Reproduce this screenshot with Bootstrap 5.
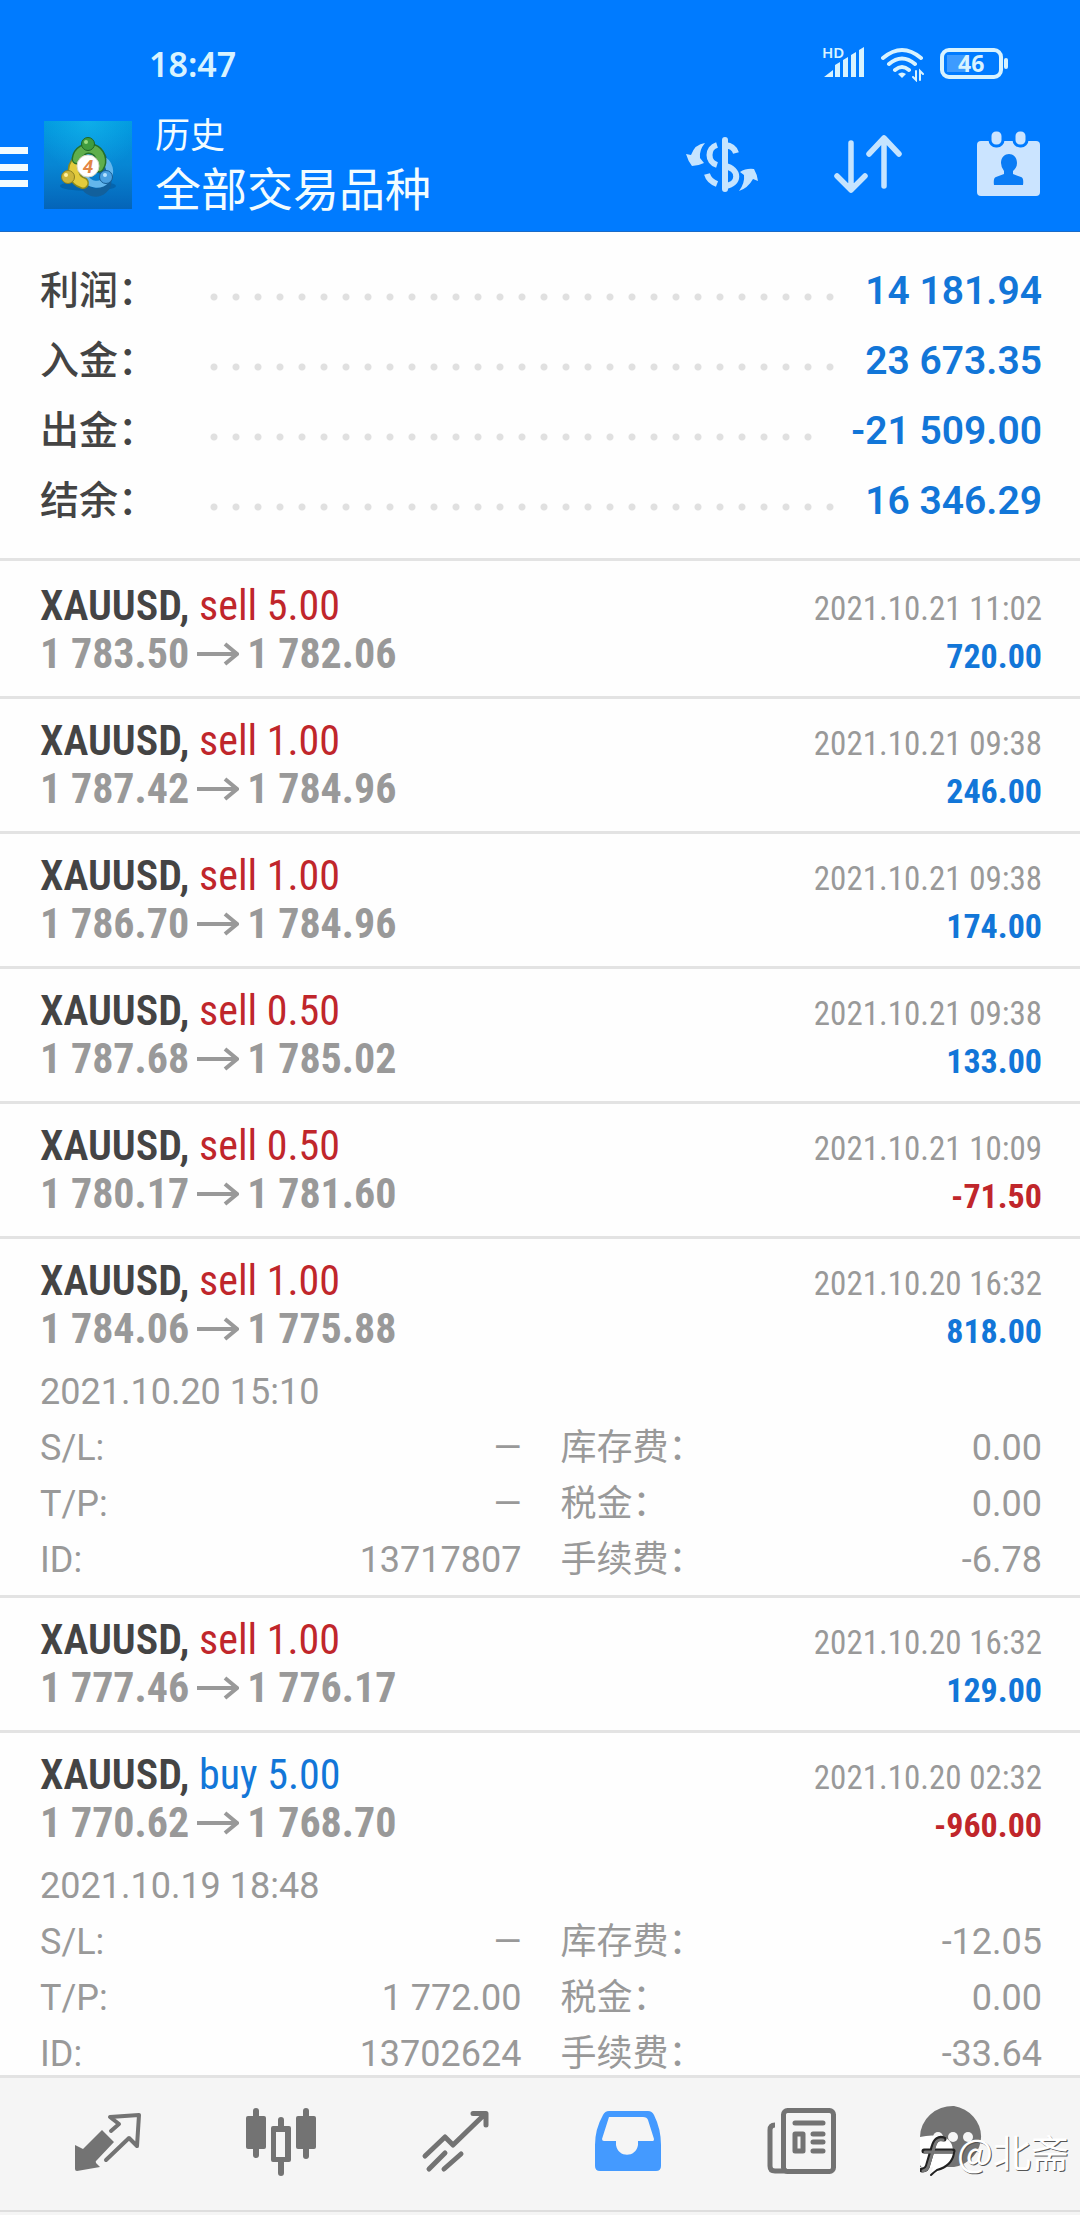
<!DOCTYPE html>
<html lang="zh-CN">
<head>
<meta charset="utf-8">
<meta name="viewport" content="width=device-width, initial-scale=1">
<title>历史 - 全部交易品种</title>
<link href="https://cdn.jsdelivr.net/npm/bootstrap@5.3.0/dist/css/bootstrap.min.css" rel="stylesheet">
<style>
:root{--ink:#444;--muted:#999;--up:#1276d8;--down:#c0262b;--line:#e3e3e3;--brand:#007bff;--glyph:#c5e4ff}
body{font-family:Roboto,"Noto Sans CJK SC",sans-serif;background:#fefefe;color:var(--ink)}
svg{display:block;flex:none}
.topbar{background:var(--brand);border-bottom:1px solid #1a6bc8;color:#f2fcff}
.status{height:90px;padding:36px 71px 0 149px;color:#d8f3ff}
.clock{font:600 34px/56px "Noto Sans",sans-serif}
.titlebar{height:141px;padding:21px 39px 0 0}
.plain{background:none;border:0;padding:0;color:inherit}
.menu{margin-top:36px}
.title-sm{font-size:35px;line-height:46px}
.title-lg{font-size:46px;line-height:60px;font-weight:400}
.titles{margin:-1px 0 0 22px;font-family:"Noto Sans CJK SC",sans-serif}
.tools{gap:75px;color:var(--glyph)}
.feed{overflow-y:auto;scrollbar-width:none}
.summary{padding:22px 38px 24px 40px;border-bottom:3px solid var(--line)}
.sum-line{height:70px}
.sum-line dt{width:170px;font:500 39px/66px "Noto Sans CJK SC",sans-serif}
.sum-line dd{font-size:39px;line-height:66px;font-weight:600;color:var(--up)}
.leader{height:8px;align-self:center;margin:16px 30px 0 0;background:radial-gradient(circle at 4px 4px,#e0e0e0 3px,transparent 4px) 0 0/22px 8px repeat-x}
.deal{padding:18px 38px 18px 40px;border-bottom:3px solid var(--line);font-family:"Roboto Condensed","Liberation Sans Narrow",Roboto,sans-serif}
.deal:first-child{padding-top:21px}
.deal-open{padding-bottom:7px}
.deal-row{height:48px;line-height:48px}
.sym{font-size:42px}
.sym b{font-weight:600}
.price{font-size:42px;font-weight:700;color:var(--muted)}
.when{font-size:33px;color:var(--muted)}
.gain{font-size:34px;font-weight:700}
.c-up{color:var(--up)}
.c-down{color:var(--down)}
.info{margin:11px 0 0;font:400 36px/56px Roboto,"Noto Sans CJK SC",sans-serif;color:var(--muted)}
.info-cols{column-gap:39px}
.info dt{font-weight:400}
.tabs{height:140px;background:#f5f5f5;border-top:3px solid var(--line);color:#737373}
.tabs a{color:inherit;height:128px}
.tabs a.on{color:#449aff}
.foot{border-bottom:2px solid #dedede;height:134px;padding:0 18px 0 21px}
.stamp{right:11px;bottom:36px;font:400 38px/56px "Noto Sans CJK SC",sans-serif;color:#fff;text-shadow:1px 1px 0 #555}
</style>
</head>
<body>
<div class="d-flex flex-column vh-100 overflow-hidden position-relative">
<header class="topbar flex-shrink-0">
  <div class="status d-flex justify-content-between align-items-start">
    <span class="clock">18:47</span>
    <div class="d-flex align-items-start pt-1 gap-3">
      <svg width="44" height="40" viewBox="-2 -7 44 40" fill="currentColor"><text x="-1" y="11" font-family="Noto Sans" font-weight="600" font-size="15">HD</text><path d="M1 30 10 23V30zM12 18l5-3v15h-5zM20 13l5-3v20h-5zM28 8l5-3v25h-5zM36 3l5-3v30h-5z"/></svg>
      <svg width="43" height="42" viewBox="0 -7 43 42" fill="none" stroke="currentColor" stroke-width="4" stroke-linecap="round"><path d="M2 11Q21-5 40 11M8 17Q21 6 34 17M14 23Q21 17 28 23"/><path d="M17 27q4-3 8 0l-4 4z" fill="currentColor" stroke="none"/><path d="M35 24v9l-3-3M39 33v-9l3 3" stroke-width="2"/></svg>
      <svg width="69" height="42" viewBox="0 -8 69 42" fill="none" stroke="currentColor"><rect x="2" y="2" width="59" height="27" rx="7" stroke-width="4"/><rect x="7" y="7" width="22" height="17" fill="#3d9bff" stroke="none"/><path d="M66 12v7" stroke-width="4" stroke-linecap="round"/><text x="18" y="24" fill="currentColor" stroke="none" font-family="Noto Sans" font-weight="700" font-size="23">46</text></svg>
    </div>
  </div>
  <div class="titlebar d-flex align-items-start">
    <button class="plain menu" type="button" aria-label="菜单"><svg width="28" height="40" viewBox="0 0 28 40" fill="currentColor"><path d="M0 0h28v7H0zM0 17h28v7H0zM0 33h28v7H0z"/></svg></button>
    <svg class="ms-3 mt-2" width="89" height="91" viewBox="0 0 89 91">
      <defs><linearGradient id="tile" x2="0" y2="1"><stop stop-color="#0098de"/><stop offset=".5" stop-color="#0786d4"/><stop offset="1" stop-color="#0464b8"/></linearGradient>
      <radialGradient id="shine" cx=".5" cy="0" r=".6"><stop stop-color="#1cc4f4" stop-opacity=".5"/><stop offset="1" stop-color="#1cc4f4" stop-opacity="0"/></radialGradient></defs>
      <rect y="2" width="88" height="88" fill="url(#tile)"/><rect y="2" width="88" height="88" fill="url(#shine)"/>
      <ellipse cx="44" cy="67" rx="28" ry="5" fill="#034b86" opacity=".4"/>
      <g fill="none" stroke-linecap="round"><path d="M57 36a12 12 0 0 1 0 15a12 12 0 1 1-17 14" stroke="#12609c" stroke-width="8"/>
      <path d="M57 40a13 13 0 1 1-16 18" stroke="#63b6ec" stroke-width="7"/>
      <path d="M34 42a13 13 0 0 0 5 22" stroke="#8b8a1d" stroke-width="12"/><path d="M34 42a13 13 0 0 0 5 22" stroke="#e3cb3c" stroke-width="9"/>
      <path d="M33 40a12 12 0 1 1 22 8" stroke="#25702a" stroke-width="11"/><path d="M33 40a12 12 0 1 1 22 8" stroke="#5fae4c" stroke-width="8"/></g>
      <circle cx="44" cy="25" r="6.500" fill="#3f9c3f" stroke="#1f6425"/><circle cx="42" cy="23" r="2" fill="#9bdc80"/>
      <circle cx="24" cy="58" r="6.500" fill="#cdb63a" stroke="#8a8020"/><circle cx="22" cy="56" r="2" fill="#fff1a0"/>
      <circle cx="62" cy="58" r="6.500" fill="#4aa0e0" stroke="#155c94"/><circle cx="61" cy="56" r="2" fill="#b6e2ff"/>
      <circle cx="44" cy="47" r="11" fill="#fff" stroke="#d9d6c0"/><text x="44" y="54" text-anchor="middle" font-family="Roboto" font-weight="700" font-style="italic" font-size="19" fill="#e38544">4</text>
    </svg>
    <h1 class="titles"><span class="d-block title-sm fw-normal">历史</span><span class="d-block title-lg">全部交易品种</span></h1>
    <div class="tools ms-auto d-flex align-items-center mt-3 pt-1">
      <button class="plain" type="button" aria-label="货币"><svg width="73" height="66" viewBox="0 -5 73 66" fill="none" stroke="currentColor" stroke-width="6"><path d="M19 7Q9 8 5 19L0 18Q2 25 6 30 12 30 18 27L14 22Q13 14 19 7zM53 55q9-3 14-12l5 2q-1-7-4-12-8-1-14 3l4 3q1 8-5 16z" fill="currentColor" stroke="none"/><path d="M31 9c-10 3-10 17 0 20M39 9q9 1 11 8M39 30c15 3 15 18 0 20M21 38q2 7 10 10"/><path d="M39 4v49" stroke-linecap="round"/></svg></button>
      <button class="plain" type="button" aria-label="排序"><svg width="68" height="66" viewBox="0 -4 68 66" fill="none" stroke="currentColor" stroke-width="5.500" stroke-linecap="round" stroke-linejoin="round"><path d="M17 8v47M3 41l14 14 14-14M50 51V3M35 19 50 3l15 16"/></svg></button>
      <button class="plain" type="button" aria-label="日期"><svg width="64" height="66" viewBox="0 0 64 66" fill="#cbe4ff"><rect y="10" width="63" height="55" rx="4"/><g stroke="#007bff" stroke-width="3"><rect x="13" y="-1" width="13" height="16" rx="6"/><rect x="37" y="-1" width="13" height="16" rx="6"/></g><path d="M24 32c0-12 16-12 16 0 0 4-2 6-4 8v3l8 3q3 1 2 8H17q-1-7 2-8l8-3v-3q-3-4-3-8z" fill="#0a7cf5"/></svg></button>
    </div>
  </div>
</header>

<main class="feed flex-grow-1">
  <dl class="summary mb-0">
    <div class="sum-line d-flex align-items-baseline"><dt>利润：</dt><span class="leader flex-grow-1"></span><dd class="mb-0">14 181.94</dd></div>
    <div class="sum-line d-flex align-items-baseline"><dt>入金：</dt><span class="leader flex-grow-1"></span><dd class="mb-0">23 673.35</dd></div>
    <div class="sum-line d-flex align-items-baseline"><dt>出金：</dt><span class="leader flex-grow-1"></span><dd class="mb-0">-21 509.00</dd></div>
    <div class="sum-line d-flex align-items-baseline"><dt>结余：</dt><span class="leader flex-grow-1"></span><dd class="mb-0">16 346.29</dd></div>
  </dl>
  <svg width="0" height="0" class="position-absolute"><symbol id="to" viewBox="0 0 42 24"><path d="M0 12h40M28 2l12 10-12 10" fill="none" stroke="currentColor" stroke-width="4"/></symbol></svg>
  <ul class="list-unstyled mb-0">
    <li class="deal">
      <div class="deal-row d-flex justify-content-between align-items-baseline"><span class="sym"><b>XAUUSD,</b> <span class="c-down">sell 5.00</span></span><time class="when">2021.10.21 11:02</time></div>
      <div class="deal-row d-flex justify-content-between align-items-baseline"><span class="price d-flex align-items-center">1 783.50<svg class="mx-2" width="42" height="24"><use href="#to"/></svg>1 782.06</span><span class="gain c-up">720.00</span></div>
    </li>
    <li class="deal">
      <div class="deal-row d-flex justify-content-between align-items-baseline"><span class="sym"><b>XAUUSD,</b> <span class="c-down">sell 1.00</span></span><time class="when">2021.10.21 09:38</time></div>
      <div class="deal-row d-flex justify-content-between align-items-baseline"><span class="price d-flex align-items-center">1 787.42<svg class="mx-2" width="42" height="24"><use href="#to"/></svg>1 784.96</span><span class="gain c-up">246.00</span></div>
    </li>
    <li class="deal">
      <div class="deal-row d-flex justify-content-between align-items-baseline"><span class="sym"><b>XAUUSD,</b> <span class="c-down">sell 1.00</span></span><time class="when">2021.10.21 09:38</time></div>
      <div class="deal-row d-flex justify-content-between align-items-baseline"><span class="price d-flex align-items-center">1 786.70<svg class="mx-2" width="42" height="24"><use href="#to"/></svg>1 784.96</span><span class="gain c-up">174.00</span></div>
    </li>
    <li class="deal">
      <div class="deal-row d-flex justify-content-between align-items-baseline"><span class="sym"><b>XAUUSD,</b> <span class="c-down">sell 0.50</span></span><time class="when">2021.10.21 09:38</time></div>
      <div class="deal-row d-flex justify-content-between align-items-baseline"><span class="price d-flex align-items-center">1 787.68<svg class="mx-2" width="42" height="24"><use href="#to"/></svg>1 785.02</span><span class="gain c-up">133.00</span></div>
    </li>
    <li class="deal">
      <div class="deal-row d-flex justify-content-between align-items-baseline"><span class="sym"><b>XAUUSD,</b> <span class="c-down">sell 0.50</span></span><time class="when">2021.10.21 10:09</time></div>
      <div class="deal-row d-flex justify-content-between align-items-baseline"><span class="price d-flex align-items-center">1 780.17<svg class="mx-2" width="42" height="24"><use href="#to"/></svg>1 781.60</span><span class="gain c-down">-71.50</span></div>
    </li>
    <li class="deal deal-open">
      <div class="deal-row d-flex justify-content-between align-items-baseline"><span class="sym"><b>XAUUSD,</b> <span class="c-down">sell 1.00</span></span><time class="when">2021.10.20 16:32</time></div>
      <div class="deal-row d-flex justify-content-between align-items-baseline"><span class="price d-flex align-items-center">1 784.06<svg class="mx-2" width="42" height="24"><use href="#to"/></svg>1 775.88</span><span class="gain c-up">818.00</span></div>
      <div class="info">
        <time class="d-block">2021.10.20 15:10</time>
        <div class="info-cols d-flex">
          <dl class="flex-fill w-50 mb-0">
            <div class="d-flex justify-content-between"><dt>S/L:</dt><dd class="mb-0">—</dd></div>
            <div class="d-flex justify-content-between"><dt>T/P:</dt><dd class="mb-0">—</dd></div>
            <div class="d-flex justify-content-between"><dt>ID:</dt><dd class="mb-0">13717807</dd></div>
          </dl>
          <dl class="flex-fill w-50 mb-0">
            <div class="d-flex justify-content-between"><dt>库存费：</dt><dd class="mb-0">0.00</dd></div>
            <div class="d-flex justify-content-between"><dt>税金：</dt><dd class="mb-0">0.00</dd></div>
            <div class="d-flex justify-content-between"><dt>手续费：</dt><dd class="mb-0">-6.78</dd></div>
          </dl>
        </div>
      </div>
    </li>
    <li class="deal">
      <div class="deal-row d-flex justify-content-between align-items-baseline"><span class="sym"><b>XAUUSD,</b> <span class="c-down">sell 1.00</span></span><time class="when">2021.10.20 16:32</time></div>
      <div class="deal-row d-flex justify-content-between align-items-baseline"><span class="price d-flex align-items-center">1 777.46<svg class="mx-2" width="42" height="24"><use href="#to"/></svg>1 776.17</span><span class="gain c-up">129.00</span></div>
    </li>
    <li class="deal deal-open">
      <div class="deal-row d-flex justify-content-between align-items-baseline"><span class="sym"><b>XAUUSD,</b> <span class="c-up">buy 5.00</span></span><time class="when">2021.10.20 02:32</time></div>
      <div class="deal-row d-flex justify-content-between align-items-baseline"><span class="price d-flex align-items-center">1 770.62<svg class="mx-2" width="42" height="24"><use href="#to"/></svg>1 768.70</span><span class="gain c-down">-960.00</span></div>
      <div class="info">
        <time class="d-block">2021.10.19 18:48</time>
        <div class="info-cols d-flex">
          <dl class="flex-fill w-50 mb-0">
            <div class="d-flex justify-content-between"><dt>S/L:</dt><dd class="mb-0">—</dd></div>
            <div class="d-flex justify-content-between"><dt>T/P:</dt><dd class="mb-0">1 772.00</dd></div>
            <div class="d-flex justify-content-between"><dt>ID:</dt><dd class="mb-0">13702624</dd></div>
          </dl>
          <dl class="flex-fill w-50 mb-0">
            <div class="d-flex justify-content-between"><dt>库存费：</dt><dd class="mb-0">-12.05</dd></div>
            <div class="d-flex justify-content-between"><dt>税金：</dt><dd class="mb-0">0.00</dd></div>
            <div class="d-flex justify-content-between"><dt>手续费：</dt><dd class="mb-0">-33.64</dd></div>
          </dl>
        </div>
      </div>
    </li>
  </ul>
</main>

<nav class="tabs flex-shrink-0" aria-label="主导航">
  <div class="foot d-flex">
    <a class="flex-fill w-100 d-flex justify-content-center align-items-center" href="#quotes" aria-label="行情"><svg width="70" height="70" viewBox="-2 -6 70 70"><path d="M0 32l8 4 19-19 12 12-17 18q-2 1-1 3l4 4L2 58q-2 0-2-2z" fill="currentColor"/><path d="M36 18l8-7-9-7L64 2l-2 31-8-8-23 22" fill="none" stroke="currentColor" stroke-width="4" stroke-linejoin="round" stroke-linecap="round"/></svg></a>
    <a class="flex-fill w-100 d-flex justify-content-center align-items-center" href="#charts" aria-label="图表"><svg width="70" height="70" viewBox="0 -1 70 70" fill="currentColor"><rect x="7" width="6" height="50" rx="3"/><rect y="8" width="20" height="33" rx="2"/><rect x="57" width="6" height="51" rx="3"/><rect x="50" y="8" width="20" height="33" rx="2"/><path d="M32 12q0-3 3-3t3 3v6h5q2 0 2 2v32q0 2-2 2h-5v11q0 3-3 3t-3-3V54h-5q-2 0-2-2V20q0-2 2-2h5zM30 24v25h9V24z" fill-rule="evenodd"/></svg></a>
    <a class="flex-fill w-100 d-flex justify-content-center align-items-center" href="#trade" aria-label="交易"><svg width="70" height="70" viewBox="-2 -4 70 70" fill="none" stroke="currentColor" stroke-width="5" stroke-linecap="round" stroke-linejoin="round"><path d="M3 45l20-19 8 8L63 3M51 2.500h13V14M7 58l16-16M22 58l17-15"/></svg></a>
    <a class="on flex-fill w-100 d-flex justify-content-center align-items-center" href="#history" aria-label="历史" aria-current="page"><svg width="70" height="70" viewBox="-2 -4 70 70" fill="currentColor"><path d="M14 0h39q4 0 6 4 7 14 7 30v21q0 5-5 5H5q-5 0-5-5V34Q0 18 8 4q2-4 6-4zm0 6L7 28q0 2 2 2h12v4c2 13 20 13 22 0v-4h15q1 0 1-2L53 9q-1-3-5-3z" fill-rule="evenodd"/></svg></a>
    <a class="flex-fill w-100 d-flex justify-content-center align-items-center" href="#news" aria-label="新闻"><svg width="70" height="70" viewBox="0 -1 70 70" fill="none" stroke="currentColor" stroke-width="5" stroke-linejoin="round" stroke-linecap="round"><rect x="16.500" y="2.500" width="50" height="61" rx="4"/><path d="M8 17q-5 0-5 5v36q0 5 5 5h12" stroke-linecap="butt"/><path d="M28 15h28M46 26h10M46 34h10M46 43h10M28 26h8v17h-8z"/></svg></a>
    <a class="flex-fill w-100 d-flex justify-content-center align-items-center" href="#chat" aria-label="消息"><svg width="110" height="76" viewBox="0 -2 110 76"><path d="M34 0a33 31 0 0 1 0 61H0V31A33 31 0 0 1 34 0z" fill="currentColor"/><g fill="#f5f5f5"><circle cx="18" cy="31" r="5"/><circle cx="33" cy="31" r="5"/><circle cx="48" cy="31" r="5"/></g><path d="M0 31q12-3 24 0 10 4 9 18-2 12-13 16l-9 5 2-9q-10 4-13-2z" fill="#fff"/><g fill="none" stroke-linecap="round"><path d="M24 33q-8-3-11 8L8 58q-1 6-6 6M4 45h29" stroke="#222" stroke-width="5"/><path d="M23 34q-7-2-9 8L9 58q-1 6-6 7M5 46h27" stroke="#777" stroke-width="3"/><path d="M34 47q-2 13-17 17-4 3-6 5" stroke="#222" stroke-width="2"/></g></svg></a>
  </div>
</nav>
<div class="stamp position-absolute">@北斋</div>
</div>
<script src="https://cdn.jsdelivr.net/npm/bootstrap@5.3.0/dist/js/bootstrap.bundle.min.js"></script>
</body>
</html>
